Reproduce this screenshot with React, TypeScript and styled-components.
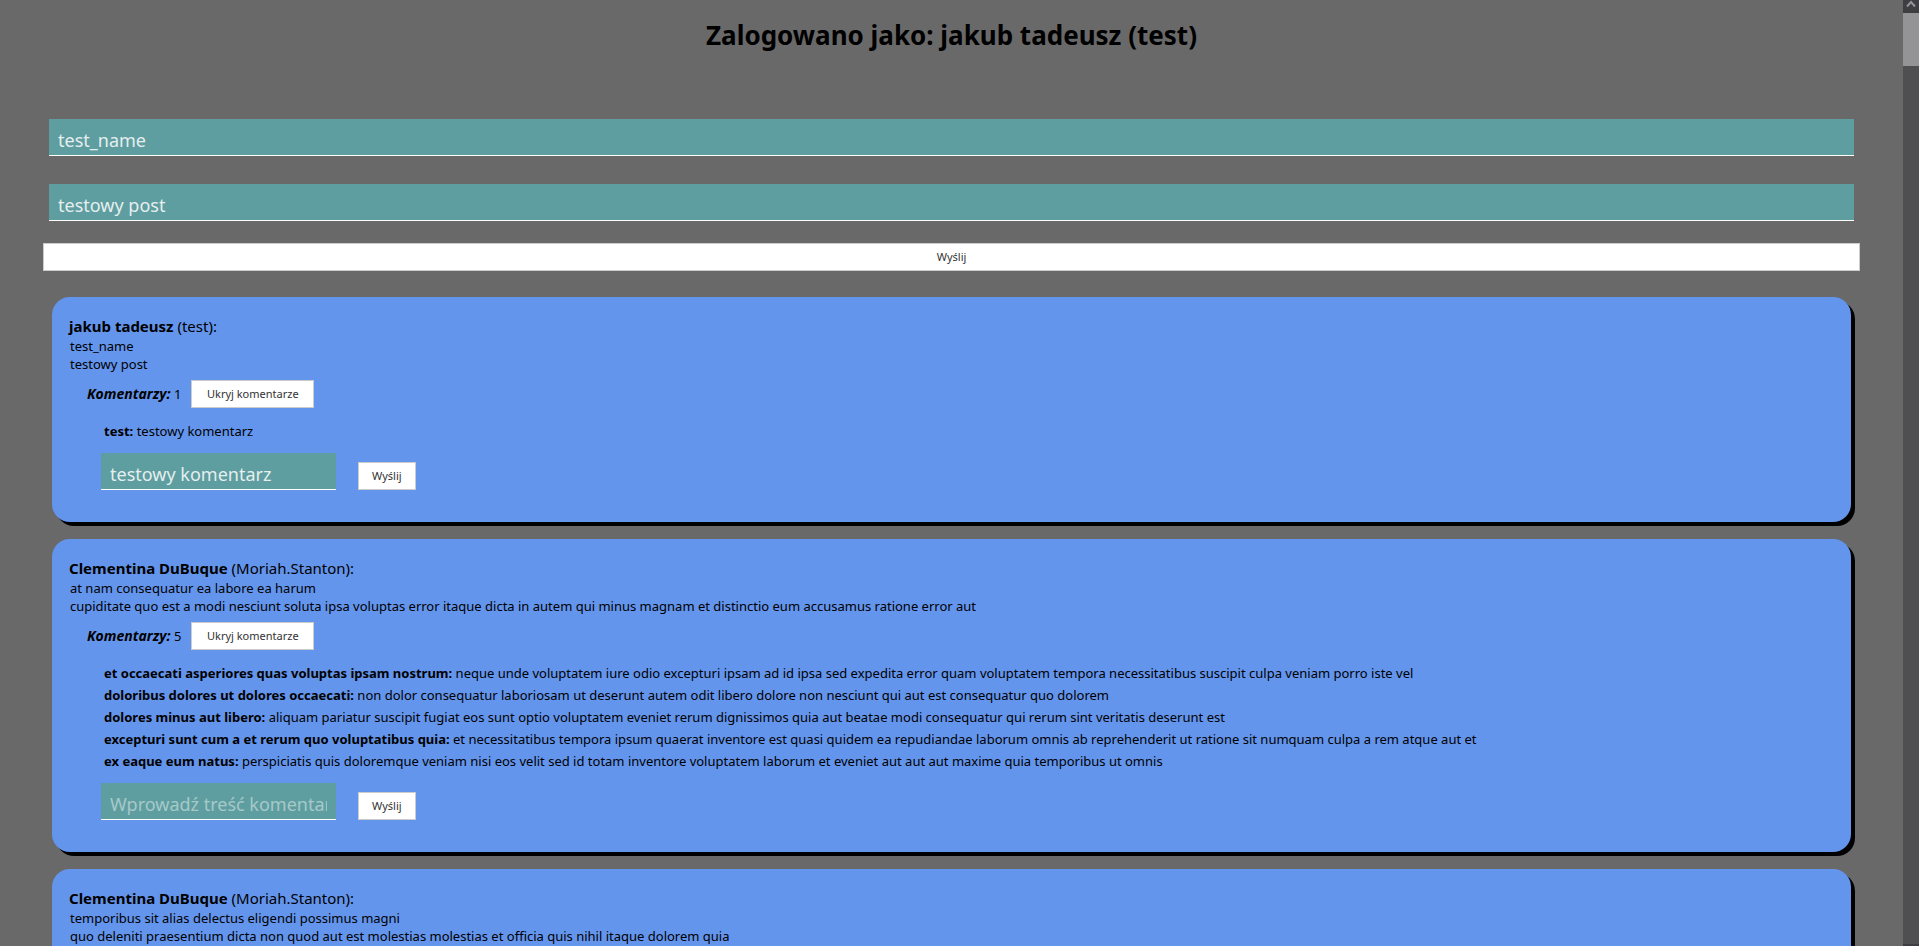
import React, { useId, useState } from 'react';
import styled, { createGlobalStyle } from 'styled-components';

const GlobalStyle = createGlobalStyle`
  * { box-sizing: border-box; }
  body {
    margin: 0;
    overflow: hidden;
    background: dimgray;
    color: #000;
    font: 13px/18px "Noto Sans", "Open Sans", sans-serif;
  }
`;

const Shell = styled.div`
  display: flex;
  height: 100vh;
`;

const Page = styled.main`
  flex: 1;
  min-width: 0;
  overflow: hidden;
  padding: 17px 43px 0;
`;

const Title = styled.h1`
  margin: 0 0 66px;
  font-size: 26px;
  line-height: 36px;
  text-align: center;
`;

const PostForm = styled.form`
  display: flex;
  flex-direction: column;
  margin-bottom: 26px;
`;

const TextField = styled.input`
  height: 37px;
  padding: 5px 9px 0;
  border: 0;
  border-bottom: 1px solid #fff;
  border-radius: 0;
  outline: 0;
  background: cadetblue;
  color: rgba(255, 255, 255, 0.85);
  font: 18px/28px "Noto Sans", "Open Sans", sans-serif;

  &::placeholder {
    color: rgba(255, 255, 255, 0.45);
    opacity: 1;
  }
`;

const PostField = styled(TextField)`
  margin: 0 6px 28px;

  & + & {
    margin-bottom: 22px;
  }
`;

const CommentField = styled(TextField)`
  width: 235px;
`;

const Button = styled.button`
  height: 28px;
  padding: 0 13px;
  border: 1px solid #ccc;
  border-radius: 0;
  background: #fff;
  color: #333;
  font: 11px/18px "Noto Sans", "Open Sans", sans-serif;
  cursor: pointer;
`;

const ToggleButton = styled(Button)`
  width: 123px;
`;

const Feed = styled.section`
  display: flex;
  flex-direction: column;
  gap: 17px;
  padding: 0 9px;
`;

const Card = styled.article`
  padding: 19px 17px 32px;
  border-radius: 18px;
  background: cornflowerblue;
  box-shadow: 4px 4px 0 #000;
`;

const Author = styled.h2`
  margin: 0 0 1px;
  font-size: 15px;
  font-weight: 400;
  line-height: 20px;
`;

const Line = styled.p`
  margin: 0;
  padding-left: 1px;
`;

const CommentBar = styled.div`
  display: flex;
  align-items: center;
  gap: 10px;
  margin: 7px 0 12px 18px;
`;

const CountLabel = styled.em`
  font-size: 14px;
  font-weight: 700;
`;

const CommentList = styled.ul`
  margin: 0 0 11px 35px;
  padding: 0;
  list-style: none;
  line-height: 22px;
`;

const CommentForm = styled.form`
  display: flex;
  align-items: flex-end;
  gap: 22px;
  margin-left: 32px;
`;

const ScrollRail = styled.div`
  display: flex;
  flex-direction: column;
  width: 16px;
  background: #4f4f51;
`;

const RailEnd = styled.div<{ $size: number }>`
  display: flex;
  justify-content: center;
  height: ${(p) => p.$size}px;
  background: #3e3e42;
`;

const RailThumb = styled.div`
  height: 53px;
  margin-bottom: auto;
  background: #949496;
`;

interface PostComment {
  name: string;
  body: string;
}

interface PostData {
  author: string;
  login: string;
  title: string;
  body: string;
  draft: string;
  comments: PostComment[];
}

const posts: PostData[] = [
  {
    author: 'jakub tadeusz',
    login: 'test',
    title: 'test_name',
    body: 'testowy post',
    draft: 'testowy komentarz',
    comments: [{ name: 'test', body: 'testowy komentarz' }],
  },
  {
    author: 'Clementina DuBuque',
    login: 'Moriah.Stanton',
    title: 'at nam consequatur ea labore ea harum',
    body: 'cupiditate quo est a modi nesciunt soluta ipsa voluptas error itaque dicta in autem qui minus magnam et distinctio eum accusamus ratione error aut',
    draft: '',
    comments: [
      {
        name: 'et occaecati asperiores quas voluptas ipsam nostrum',
        body: 'neque unde voluptatem iure odio excepturi ipsam ad id ipsa sed expedita error quam voluptatem tempora necessitatibus suscipit culpa veniam porro iste vel',
      },
      {
        name: 'doloribus dolores ut dolores occaecati',
        body: 'non dolor consequatur laboriosam ut deserunt autem odit libero dolore non nesciunt qui aut est consequatur quo dolorem',
      },
      {
        name: 'dolores minus aut libero',
        body: 'aliquam pariatur suscipit fugiat eos sunt optio voluptatem eveniet rerum dignissimos quia aut beatae modi consequatur qui rerum sint veritatis deserunt est',
      },
      {
        name: 'excepturi sunt cum a et rerum quo voluptatibus quia',
        body: 'et necessitatibus tempora ipsum quaerat inventore est quasi quidem ea repudiandae laborum omnis ab reprehenderit ut ratione sit numquam culpa a rem atque aut et',
      },
      {
        name: 'ex eaque eum natus',
        body: 'perspiciatis quis doloremque veniam nisi eos velit sed id totam inventore voluptatem laborum et eveniet aut aut aut maxime quia temporibus ut omnis',
      },
    ],
  },
  {
    author: 'Clementina DuBuque',
    login: 'Moriah.Stanton',
    title: 'temporibus sit alias delectus eligendi possimus magni',
    body: 'quo deleniti praesentium dicta non quod aut est molestias molestias et officia quis nihil itaque dolorem quia',
    draft: '',
    comments: [],
  },
];

function Post({ post }: { post: PostData }) {
  const [open, setOpen] = useState(post.comments.length > 0);
  const [draft, setDraft] = useState(post.draft);
  const fieldId = useId();

  return (
    <Card>
      <Author>
        <strong>{post.author}</strong> ({post.login}):
      </Author>
      <Line>{post.title}</Line>
      <Line>{post.body}</Line>
      {post.comments.length > 0 && (
        <CommentBar>
          <span>
            <CountLabel>Komentarzy:</CountLabel> {post.comments.length}
          </span>
          <ToggleButton type="button" aria-expanded={open} onClick={() => setOpen(!open)}>
            {open ? 'Ukryj komentarze' : 'Pokaż komentarze'}
          </ToggleButton>
        </CommentBar>
      )}
      {open && (
        <>
          <CommentList>
            {post.comments.map((comment) => (
              <li key={comment.name}>
                <strong>{comment.name}:</strong> {comment.body}
              </li>
            ))}
          </CommentList>
          <CommentForm onSubmit={(e) => e.preventDefault()}>
            <CommentField
              id={fieldId}
              aria-label="Treść komentarza"
              placeholder="Wprowadź treść komentarza"
              value={draft}
              onChange={(e) => setDraft(e.target.value)}
            />
            <Button type="submit">Wyślij</Button>
          </CommentForm>
        </>
      )}
    </Card>
  );
}

export default function App() {
  const [title, setTitle] = useState('test_name');
  const [body, setBody] = useState('testowy post');

  return (
    <>
      <GlobalStyle />
      <Shell>
        <Page>
          <Title>Zalogowano jako: jakub tadeusz (test)</Title>
          <PostForm onSubmit={(e) => e.preventDefault()}>
            <PostField aria-label="Tytuł posta" value={title} onChange={(e) => setTitle(e.target.value)} />
            <PostField aria-label="Treść posta" value={body} onChange={(e) => setBody(e.target.value)} />
            <Button type="submit">Wyślij</Button>
          </PostForm>
          <Feed>
            {posts.map((post) => (
              <Post key={post.title} post={post} />
            ))}
          </Feed>
        </Page>
        <ScrollRail aria-hidden="true">
          <RailEnd $size={13}>
            <svg width="10" height="8" viewBox="0 0 10 8" fill="none" stroke="#949496" strokeWidth="2">
              <path d="M1 6.5 5 2l4 4.5" />
            </svg>
          </RailEnd>
          <RailThumb />
          <RailEnd $size={2} />
        </ScrollRail>
      </Shell>
    </>
  );
}
